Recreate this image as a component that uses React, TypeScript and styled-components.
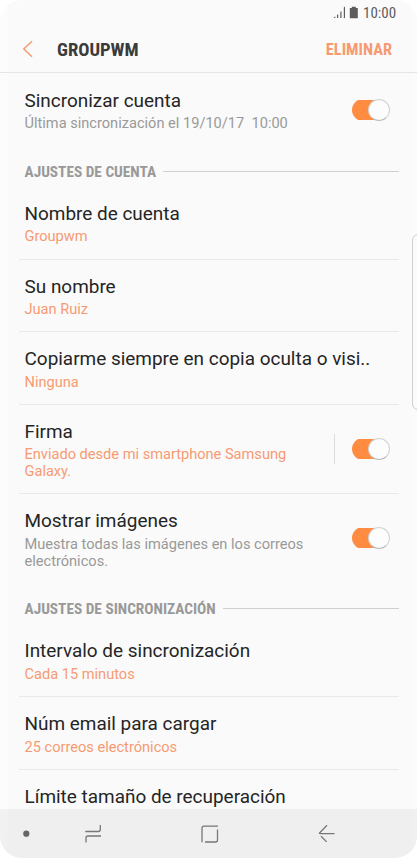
import React from "react";
import styled, { createGlobalStyle } from "styled-components";

const GlobalStyle = createGlobalStyle`
  html, body { margin: 0; background: #fff; }
  * { box-sizing: border-box; }
`;

const Screen = styled.div`
  position: relative;
  display: flex;
  flex-direction: column;
  width: 417px;
  height: 858px;
  overflow: hidden;
  border-radius: 22px;
  background: linear-gradient(90deg, #fcfcfc 0 7px, #fafafa 8px 410px, #fbfbfb 411px);
  font-family: Roboto, "Liberation Sans", sans-serif;
`;

const StatusBar = styled.div`
  flex: none;
  display: flex;
  align-items: center;
  justify-content: flex-end;
  height: 26px;
  padding-right: 21px;
  color: #5c5c5c;
`;

const Clock = styled.span`
  width: 33px;
  margin-left: 4px;
  font-family: "Roboto Condensed", Roboto, sans-serif;
  font-stretch: 75%;
  font-size: 15px;
  line-height: 16px;
  white-space: nowrap;
`;

const Header = styled.header`
  flex: none;
  display: flex;
  align-items: center;
  height: 47px;
  padding: 0 25px 0 22px;
  border-bottom: 1px solid #e6e6e6;
`;

const Condensed = styled.span<{ $size: number; $color: string }>`
  display: block;
  font-family: "Roboto Condensed", Roboto, sans-serif;
  font-stretch: 75%;
  font-weight: 700;
  font-size: ${(p) => p.$size}px;
  line-height: 24px;
  padding-top: 1px;
  color: ${(p) => p.$color};
  white-space: nowrap;
`;

const HeaderTitle = styled.div`
  flex: 1;
  margin-left: 23px;
`;

const List = styled.main`
  flex: 1;
  min-height: 0;
  overflow: hidden;
  padding: 1px 18px 0 19px;
`;

const Row = styled.section<{ $divider?: boolean; $height: number }>`
  display: flex;
  align-items: center;
  height: ${(p) => p.$height}px;
  padding: 0 9px ${(p) => (p.$divider ? 0 : 2)}px 5.5px;
  border-bottom: ${(p) => (p.$divider ? "1px solid #e9e9e9" : "none")};
`;

const RowText = styled.div`
  flex: 1;
  min-width: 0;
  align-self: flex-start;
  padding-top: 14.9px;
`;

const Title = styled.div`
  font-size: 18.95px;
  line-height: 24px;
  color: #252525;
  white-space: nowrap;
`;

const Detail = styled.div<{ $accent?: boolean }>`
  margin-top: 2.5px;
  font-size: 14.6px;
  line-height: 17px;
  color: ${(p) => (p.$accent ? "#f79a72" : "#999")};
  white-space: pre-line;
`;

const SectionHead = styled.div`
  display: flex;
  align-items: center;
  height: 40px;
  padding: 9px 0 0 5.5px;
`;

const Rule = styled.div`
  flex: 1;
  height: 1px;
  margin-left: 7px;
  background: #d0d0d0;
`;

const Separator = styled.div`
  width: 1px;
  height: 30px;
  margin-right: 17px;
  background: #dcdcdc;
`;

const Track = styled.div`
  flex: none;
  display: flex;
  align-items: center;
  justify-content: flex-end;
  width: 38px;
  height: 22px;
  background: linear-gradient(#ff8c40, #ff8c40) 0 50% / 30px 20px no-repeat;
  border-radius: 11px;
`;

const Thumb = styled.div`
  width: 22px;
  height: 22px;
  border: 1px solid #d2d2d2;
  border-bottom-color: #bbb;
  border-radius: 50%;
  background: #fdfdfd;
`;

const EdgeHandle = styled.div`
  position: absolute;
  top: 234px;
  left: 412px;
  width: 12px;
  height: 176px;
  border: 1px solid #cfcfcf;
  border-radius: 7px;
`;

const NavBar = styled.nav`
  flex: none;
  height: 49px;
  background: linear-gradient(90deg, #f1f1f1 0 7px, #efefef 8px 410px, #f0f0f0 411px);
`;

const Toggle = () => (
  <Track>
    <Thumb />
  </Track>
);

type Setting = { title: string; detail?: string; accent?: boolean; toggle?: boolean; separator?: boolean; divider?: boolean; height: number };

const accountSettings: Setting[] = [
  { title: "Nombre de cuenta", detail: "Groupwm", accent: true, divider: true, height: 72.7 },
  { title: "Su nombre", detail: "Juan Ruiz", accent: true, divider: true, height: 72.7 },
  { title: "Copiarme siempre en copia oculta o visi..", detail: "Ninguna", accent: true, divider: true, height: 72.7 },
  { title: "Firma", detail: "Enviado desde mi smartphone Samsung\nGalaxy.", accent: true, toggle: true, separator: true, divider: true, height: 89.2 },
  { title: "Mostrar imágenes", detail: "Muestra todas las imágenes en los correos\nelectrónicos.", toggle: true, height: 90.2 },
];

const syncSettings: Setting[] = [
  { title: "Intervalo de sincronización", detail: "Cada 15 minutos", accent: true, divider: true, height: 72.7 },
  { title: "Núm email para cargar", detail: "25 correos electrónicos", accent: true, divider: true, height: 72.7 },
  { title: "Límite tamaño de recuperación", height: 72.7 },
];

const SettingRow = ({ title, detail, accent, toggle, separator, divider, height }: Setting) => (
  <Row $divider={divider} $height={height}>
    <RowText>
      <Title>{title}</Title>
      {detail && <Detail $accent={accent}>{detail}</Detail>}
    </RowText>
    {separator && <Separator />}
    {toggle && <Toggle />}
  </Row>
);

const Section = ({ label, items }: { label: string; items: Setting[] }) => (
  <>
    <SectionHead>
      <Condensed $size={15.3} $color="#999">{label}</Condensed>
      <Rule />
    </SectionHead>
    {items.map((item) => (
      <SettingRow key={item.title} {...item} />
    ))}
  </>
);

export default function App() {
  return (
    <>
      <GlobalStyle />
      <Screen>
        <StatusBar>
          <svg width="26" height="14" viewBox="0 0 26 14" fill="#5c5c5c">
            <path d="M0.5 12h1.8v-1.8zM4 12h1.2V8L4 9zM7.3 12h1.2V5L7.3 6zM10.8 12H12V0.5l-1.2 1z" />
            <path d="M16.8 2h2V.7h4V2h2v10.2h-8z" />
          </svg>
          <Clock>10:00</Clock>
        </StatusBar>
        <Header>
          <svg width="12" height="18" viewBox="0 0 12 18" fill="none" stroke="#f79a72" strokeWidth="1.5">
            <path d="M10 1.3 1.8 9l8.2 7.7" />
          </svg>
          <HeaderTitle>
            <Condensed $size={18.6} $color="#3b3b3b">GROUPWM</Condensed>
          </HeaderTitle>
          <Condensed $size={16.4} $color="#f79a72">ELIMINAR</Condensed>
        </Header>
        <List>
          <SettingRow title="Sincronizar cuenta" detail={"Última sincronización el 19/10/17 \u00a010:00"} toggle height={73} />
          <Section label="AJUSTES DE CUENTA" items={accountSettings} />
          <Section label="AJUSTES DE SINCRONIZACIÓN" items={syncSettings} />
        </List>
        <NavBar>
          <svg width="417" height="49" viewBox="0 0 417 49" fill="none" stroke="#777" strokeWidth="1.3">
            <circle cx="26.3" cy="24.7" r="3.1" fill="#666" stroke="none" />
            <path d="M85.3 22.5h13q2 0 2-2V16M101 27H88q-2 0-2 2v4.5" />
            <path d="M218 17.2h-14q-2 0-2 2v14M205 33h10.500q2 0 2-2V20.500" />
            <path d="M334.500 24.700H320M327 16.200l-7.500 7.800v1M321 27.200l5.700 5.700" />
          </svg>
        </NavBar>
        <EdgeHandle />
      </Screen>
    </>
  );
}
